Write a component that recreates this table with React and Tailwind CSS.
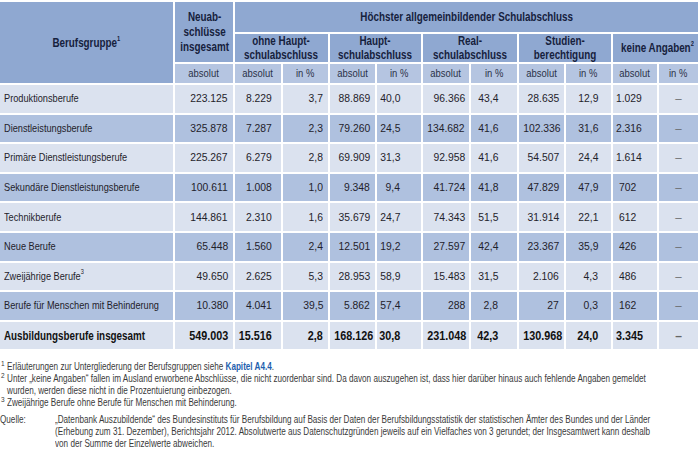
import React from "react";

const rows = [
  ["Produktionsberufe", "223.125", "8.229", "3,7", "88.869", "40,0", "96.366", "43,4", "28.635", "12,9", "1.029", "–"],
  ["Dienstleistungsberufe", "325.878", "7.287", "2,3", "79.260", "24,5", "134.682", "41,6", "102.336", "31,6", "2.316", "–"],
  ["Primäre Dienstleistungsberufe", "225.267", "6.279", "2,8", "69.909", "31,3", "92.958", "41,6", "54.507", "24,4", "1.614", "–"],
  ["Sekundäre Dienstleistungsberufe", "100.611", "1.008", "1,0", "9.348", "9,4", "41.724", "41,8", "47.829", "47,9", "702", "–"],
  ["Technikberufe", "144.861", "2.310", "1,6", "35.679", "24,7", "74.343", "51,5", "31.914", "22,1", "612", "–"],
  ["Neue Berufe", "65.448", "1.560", "2,4", "12.501", "19,2", "27.597", "42,4", "23.367", "35,9", "426", "–"],
  ["Zweijährige Berufe", "49.650", "2.625", "5,3", "28.953", "58,9", "15.483", "31,5", "2.106", "4,3", "486", "–"],
  ["Berufe für Menschen mit Behinderung", "10.380", "4.041", "39,5", "5.862", "57,4", "288", "2,8", "27", "0,3", "162", "–"],
  ["Ausbildungsberufe insgesamt", "549.003", "15.516", "2,8", "168.126", "30,8", "231.048", "42,3", "130.968", "24,0", "3.345", "–"],
];

const pads = [
  "pl-[4px] text-left",
  "pr-[5px] text-right",
  "pr-[9px] text-right",
  "pr-[5px] text-right",
  "pr-[5px] text-right",
  "pr-[21px] text-right",
  "pr-[4px] text-right",
  "pr-[19px] text-right",
  "pr-[5px] text-right",
  "pr-[13px] text-right",
  "pr-[21px] text-right",
  "text-center",
];

const widths = [
  "w-[173px]", "w-[58px]", "w-[46px]", "w-[45px]", "w-[45px]", "w-[44px]",
  "w-[46px]", "w-[46px]", "w-[45px]", "w-[45px]", "w-[44px]", "w-[39px]",
];

// condensed look: Liberation Sans squeezed horizontally
function N({ className = "", children }) {
  return <span className={"inline-block whitespace-nowrap " + className}>{children}</span>;
}

function Sup({ children }) {
  return <sup className="text-[7px] relative -top-[1px] align-super leading-none">{children}</sup>;
}

export default function App() {
  const hd = "bg-[#8fa8d1] text-[#16213d] font-bold text-center align-middle leading-[14px] text-[12px] p-0";
  const sub = "bg-[#b5c5e1] text-[#2a3147] text-center align-middle text-[11.5px] p-0";
  const H = ({ children }) => <N className="scale-x-[0.82] origin-center">{children}</N>;
  const S = ({ children }) => <N className="scale-x-[0.82] origin-center">{children}</N>;
  return (
    <div className="w-[700px] h-[462px] bg-white overflow-hidden font-['Liberation_Sans',Arial,sans-serif]">
      <table className="table-fixed border-separate border-spacing-[2px] w-[702px] -ml-[2px]">
        <colgroup>
          {widths.map((w, i) => (
            <col key={i} className={w} />
          ))}
        </colgroup>
        <thead>
          <tr className="h-[30px]">
            <th rowSpan={3} className={hd}>
              <H>
                Berufsgruppe<Sup>1</Sup>
              </H>
            </th>
            <th rowSpan={2} className={hd + " leading-[15px]"}>
              <H>
                Neuab-
                <br />
                schlüsse
                <br />
                insgesamt
              </H>
            </th>
            <th colSpan={10} className={hd}>
              <H>Höchster allgemeinbildender Schulabschluss</H>
            </th>
          </tr>
          <tr className="h-[28px]">
            <th colSpan={2} className={hd}>
              <H>
                ohne Haupt-
                <br />
                schulabschluss
              </H>
            </th>
            <th colSpan={2} className={hd}>
              <H>
                Haupt-
                <br />
                schulabschluss
              </H>
            </th>
            <th colSpan={2} className={hd}>
              <H>
                Real-
                <br />
                schulabschluss
              </H>
            </th>
            <th colSpan={2} className={hd}>
              <H>
                Studien-
                <br />
                berechtigung
              </H>
            </th>
            <th colSpan={2} className={hd}>
              <H>
                keine Angaben<Sup>2</Sup>
              </H>
            </th>
          </tr>
          <tr className="h-[19px]">
            <td className={sub}>
              <S>absolut</S>
            </td>
            {[0, 1, 2, 3, 4].map((i) => (
              <React.Fragment key={i}>
                <td className={sub}>
                  <S>absolut</S>
                </td>
                <td className={sub}>
                  <S>in %</S>
                </td>
              </React.Fragment>
            ))}
          </tr>
        </thead>
        <tbody>
          {rows.map((r, ri) => {
            const total = ri === rows.length - 1;
            const bg = ri % 2 === 1 ? "bg-[#afc1df]" : "bg-[#dbe2ef]";
            return (
              <tr key={ri} className="h-[27.6px]">
                {r.map((c, ci) => {
                  let inner;
                  if (ci === 0) {
                    inner = (
                      <N className={total ? "scale-x-[0.82] origin-left" : "scale-x-[0.8] origin-left"}>
                        {c}
                        {ri === 6 ? <Sup>3</Sup> : null}
                      </N>
                    );
                  } else if (ci === 11) {
                    inner = <N className="origin-center">{c}</N>;
                  } else {
                    inner = <N className="scale-x-[0.9] origin-right">{c}</N>;
                  }
                  return (
                    <td
                      key={ci}
                      className={
                        bg +
                        " p-0 align-middle whitespace-nowrap " +
                        pads[ci] +
                        (total ? " font-bold text-[12px] text-[#111]" : " text-[11.5px] text-[#1f222b]") +
                        (ci === 11 ? " text-[#666]" : "")
                      }
                    >
                      {inner}
                    </td>
                  );
                })}
              </tr>
            );
          })}
        </tbody>
      </table>

      <div className="mt-[9px] text-[10.5px] leading-[12px] text-[#3a3a3a] whitespace-nowrap">
        <div className="flex">
          <span className="w-[7px] shrink-0 text-[6.5px] leading-[8px] pl-[1px]">1</span>
          <N className="scale-x-[0.775] origin-left">
            Erläuterungen zur Untergliederung der Berufsgruppen siehe{" "}
            <span className="font-bold text-[#1f5fae]">Kapitel A4.4</span>.
          </N>
        </div>
        <div className="flex">
          <span className="w-[7px] shrink-0 text-[6.5px] leading-[8px] pl-[1px]">2</span>
          <N className="scale-x-[0.775] origin-left">
            Unter „keine Angaben“ fallen im Ausland erworbene Abschlüsse, die nicht zuordenbar sind. Da davon auszugehen ist, dass hier darüber hinaus auch fehlende Angaben gemeldet
            <br />
            wurden, werden diese nicht in die Prozentuierung einbezogen.
          </N>
        </div>
        <div className="flex">
          <span className="w-[7px] shrink-0 text-[6.5px] leading-[8px] pl-[1px]">3</span>
          <N className="scale-x-[0.775] origin-left">Zweijährige Berufe ohne Berufe für Menschen mit Behinderung.</N>
        </div>
        <div className="flex mt-[5px]">
          <span className="w-[55px] shrink-0">
            <N className="scale-x-[0.775] origin-left">Quelle:</N>
          </span>
          <N className="scale-x-[0.775] origin-left">
            „Datenbank Auszubildende“ des Bundesinstituts für Berufsbildung auf Basis der Daten der Berufsbildungsstatistik der statistischen Ämter des Bundes und der Länder
            <br />
            (Erhebung zum 31. Dezember), Berichtsjahr 2012. Absolutwerte aus Datenschutzgründen jeweils auf ein Vielfaches von 3 gerundet; der Insgesamtwert kann deshalb
            <br />
            von der Summe der Einzelwerte abweichen.
          </N>
        </div>
      </div>
    </div>
  );
}
